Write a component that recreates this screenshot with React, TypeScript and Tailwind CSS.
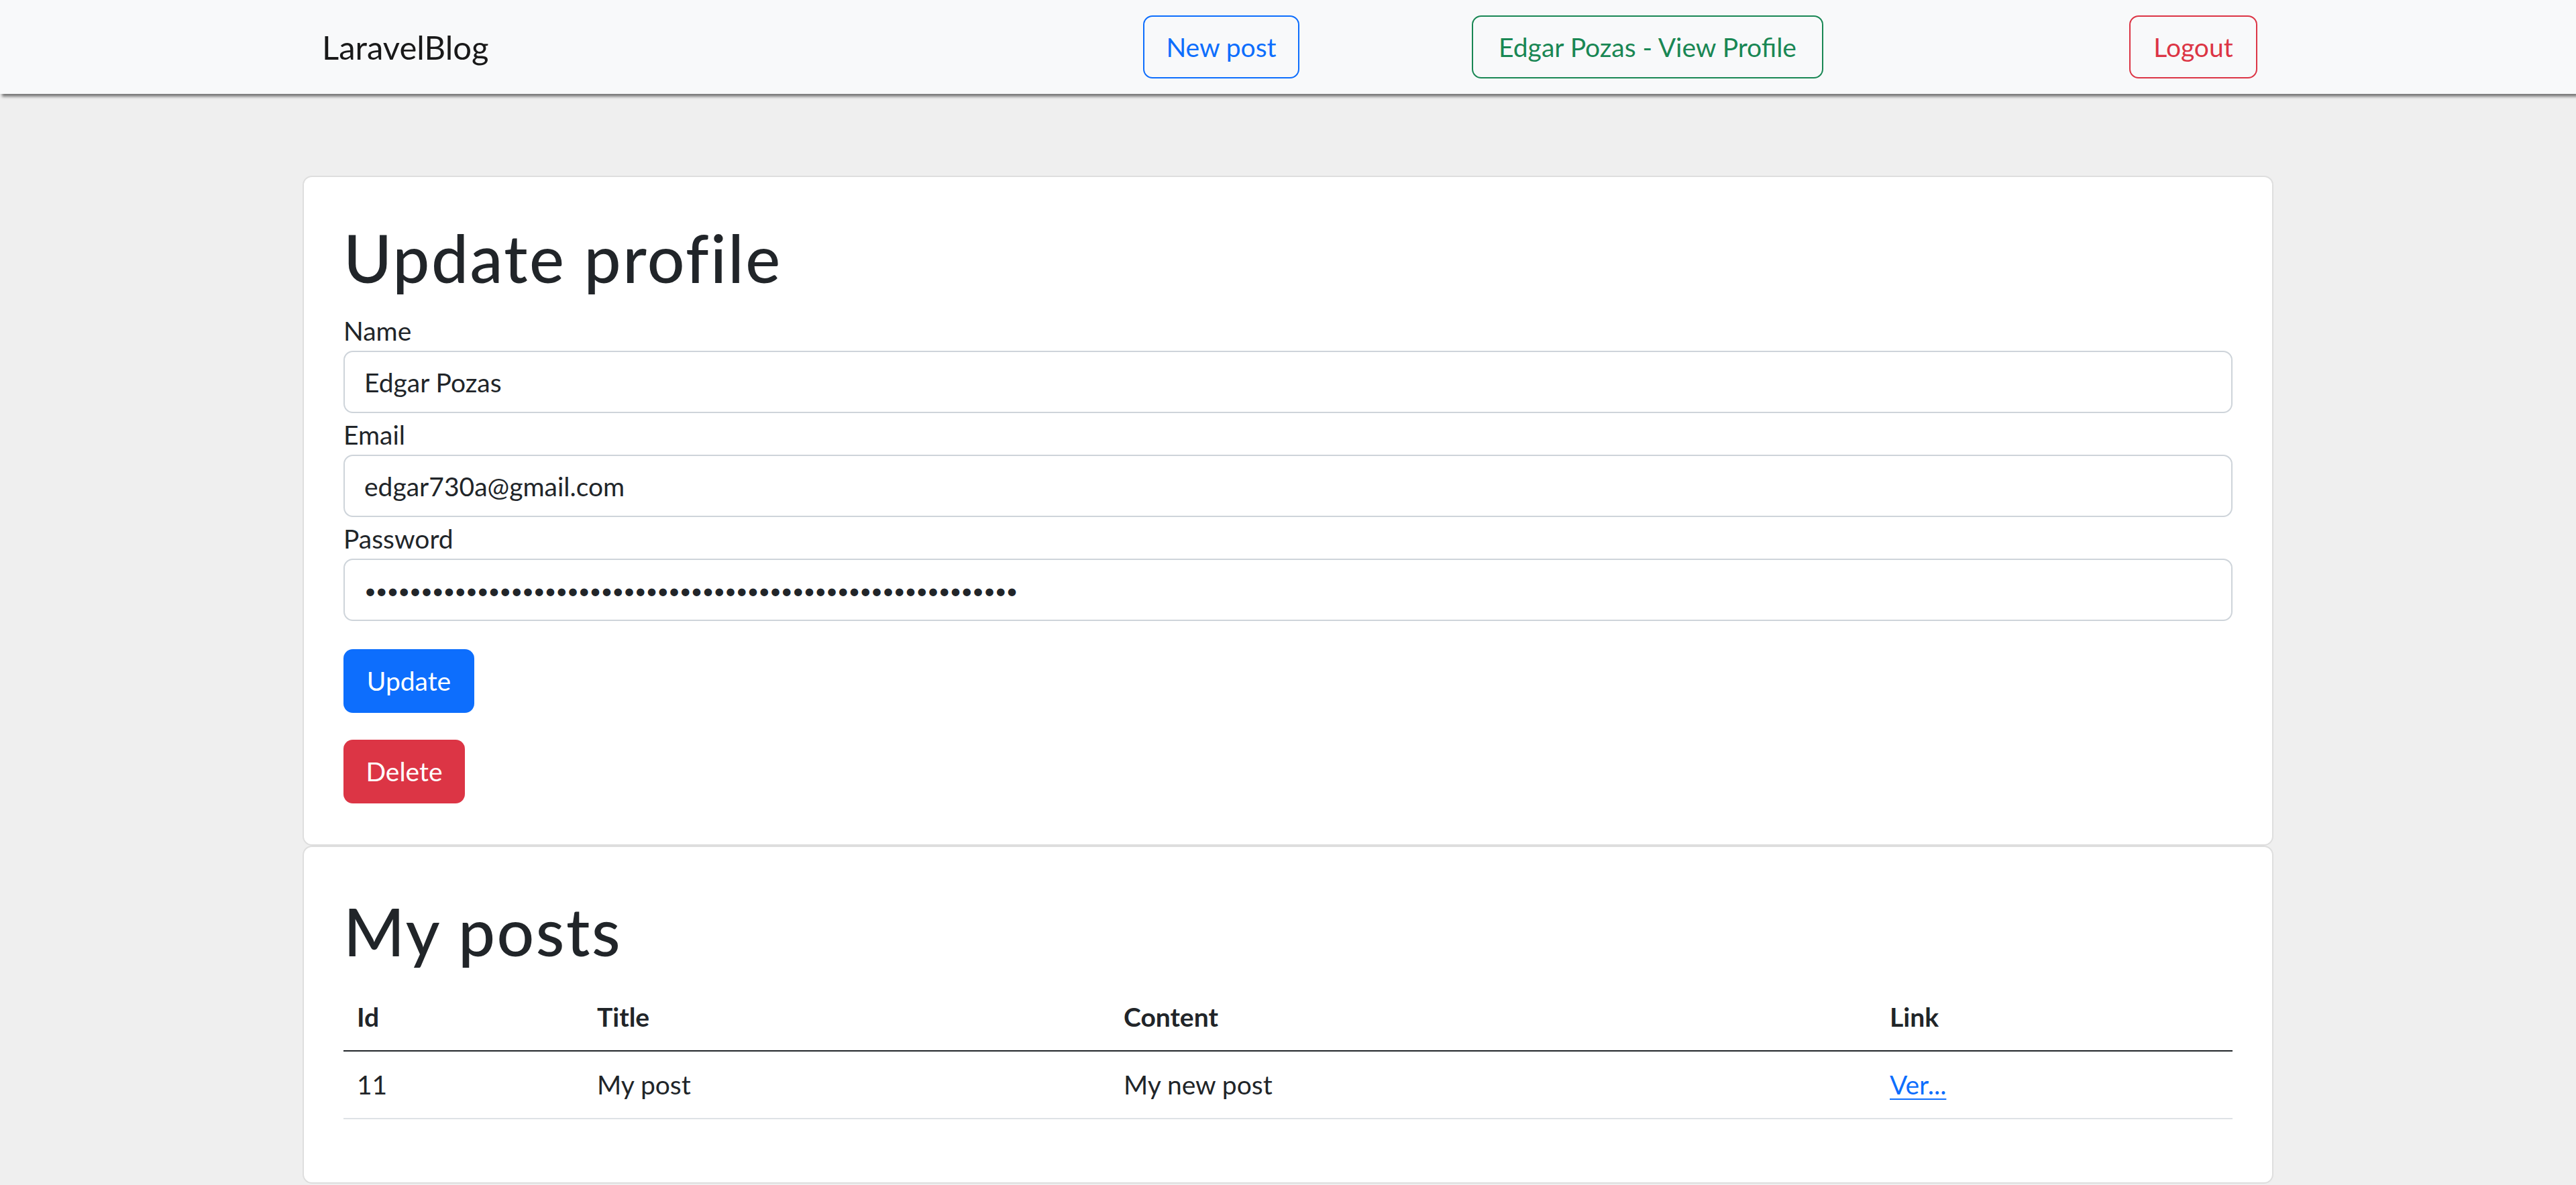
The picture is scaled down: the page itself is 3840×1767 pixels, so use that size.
import type { ReactNode } from 'react'

const posts = [{ id: 11, title: 'My post', content: 'My new post' }]

function NavButton({ className, children }: { className: string; children: ReactNode }) {
  return (
    <a
      href="#"
      className={`flex h-[94px] shrink-0 items-center justify-center whitespace-nowrap rounded-[14px] border-2 text-[39px] leading-[59px] ${className}`}
    >
      {children}
    </a>
  )
}

function Navbar() {
  return (
    <nav className="relative z-10 flex h-[140px] items-center bg-[#f8f9fa] shadow-[3px_4px_4px_rgba(0,0,0,0.5)]">
      <a href="#" className="ml-[480px] w-[1224px] shrink-0 text-[49px] leading-[74px] text-black/90">
        LaravelBlog
      </a>
      <NavButton className="w-[233px] border-[#0d6efd] text-[#0d6efd]">New post</NavButton>
      <NavButton className="ml-[257px] w-[524px] border-[#198754] text-[#198754]">Edgar Pozas - View Profile</NavButton>
      <NavButton className="ml-[456px] w-[191px] border-[#dc3545] text-[#dc3545]">Logout</NavButton>
    </nav>
  )
}

function Field({ label, type = 'text', value }: { label: string; type?: string; value: string }) {
  return (
    <div>
      <label className="block h-[62px] leading-[64px]">{label}</label>
      <input
        readOnly
        type={type}
        defaultValue={value}
        className={`block h-[93px] w-full rounded-[14px] border-2 border-[#ced4da] bg-white px-[29px] text-[#212529] outline-none ${
          type === 'password' ? 'text-[31px] tracking-[-1.2px]' : 'text-[39px]'
        }`}
      />
    </div>
  )
}

function ProfileCard() {
  return (
    <section className="rounded-[14px] border-2 border-[#dedede] bg-white px-[59px] pb-[61px] pt-[61px]">
      <h1 className="mb-[18px] text-[98px] font-medium leading-[118px] tracking-[2.5px]">Update profile</h1>
      <form>
        <Field label="Name" value="Edgar Pozas" />
        <Field label="Email" value="edgar730a@gmail.com" />
        <Field label="Password" type="password" value={'x'.repeat(58)} />
        <button
          type="button"
          className="mt-[42px] flex h-[95px] w-[195px] items-center justify-center rounded-[14px] bg-[#0d6efd] text-white"
        >
          Update
        </button>
      </form>
      <button
        type="button"
        className="mt-[40px] flex h-[95px] w-[181px] items-center justify-center rounded-[14px] bg-[#dc3545] text-white"
      >
        Delete
      </button>
    </section>
  )
}

function PostsCard() {
  return (
    <section className="rounded-[14px] border-2 border-[#dedede] bg-white px-[59px] pb-[59px] pt-[66px]">
      <h1 className="mb-[20px] text-[98px] font-medium leading-[118px] tracking-[2.5px]">My posts</h1>
      <table className="mb-[35px] w-full table-fixed border-collapse text-left">
        <colgroup>
          <col className="w-[358px]" />
          <col className="w-[785px]" />
          <col className="w-[1142px]" />
          <col />
        </colgroup>
        <thead>
          <tr className="border-b-2 border-[#212529]">
            <th className="px-[20px] py-[20px] font-bold">Id</th>
            <th className="px-[20px] py-[20px] font-bold">Title</th>
            <th className="px-[20px] py-[20px] font-bold">Content</th>
            <th className="px-[20px] py-[20px] font-bold">Link</th>
          </tr>
        </thead>
        <tbody>
          {posts.map((p) => (
            <tr key={p.id} className="border-b-2 border-[#dee2e6]">
              <td className="px-[20px] py-[20px]">{p.id}</td>
              <td className="px-[20px] py-[20px]">{p.title}</td>
              <td className="px-[20px] py-[20px]">{p.content}</td>
              <td className="px-[20px] py-[20px]">
                <a href="#" className="text-[#0d6efd] underline decoration-2 underline-offset-[6px]">
                  Ver...
                </a>
              </td>
            </tr>
          ))}
        </tbody>
      </table>
    </section>
  )
}

export default function App() {
  return (
    <div className="min-h-screen bg-[#efefef] font-['Lato',sans-serif] text-[39px] leading-[59px] text-[#212529]">
      <Navbar />
      <main className="mx-auto mt-[122px] w-[2938px]">
        <ProfileCard />
        <PostsCard />
      </main>
    </div>
  )
}
